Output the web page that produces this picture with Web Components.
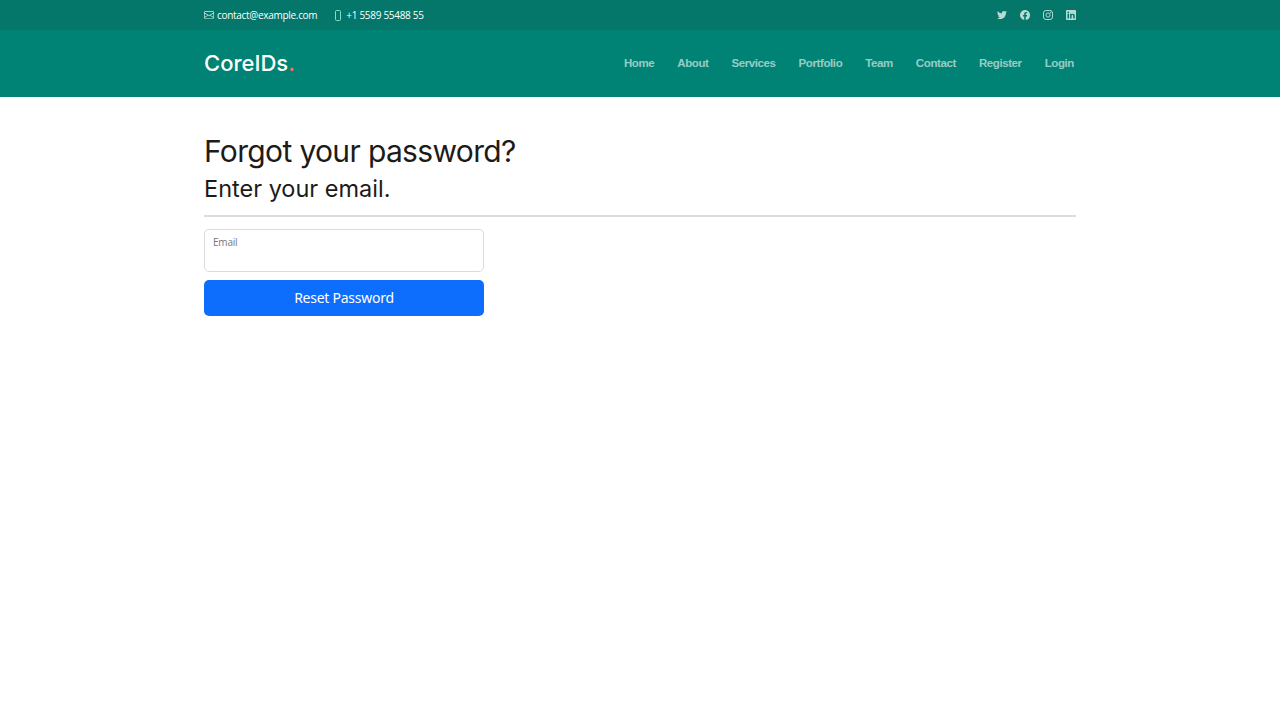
<!DOCTYPE html>
<html lang="en">
<head>
<meta charset="utf-8">
<title>Forgot your password?</title>
<style>
  html, body { margin: 0; padding: 0; background: #fff; }
</style>
</head>
<body>
<site-topbar></site-topbar>
<site-header></site-header>
<forgot-form></forgot-form>

<script>
class SiteTopbar extends HTMLElement {
  constructor() {
    super();
    this.attachShadow({ mode: 'open' });
    this.shadowRoot.innerHTML = `
      <style>
        :host { display: block; height: 30px; background: #04766a; color: #fff; font: 10px/30px "Open Sans", sans-serif; letter-spacing: -.3px; }
        .wrap { width: 872px; height: 30px; margin: 0 auto; display: flex; justify-content: space-between; align-items: center; }
        .info { display: flex; gap: 18px; }
        .info span { display: flex; align-items: center; gap: 3px; }
        .info .phone { gap: 5px; }
        .social { display: flex; gap: 13px; align-items: center; }
        svg { display: block; }
      </style>
      <div class="wrap">
        <div class="info">
          <span>
            <svg width="10" height="10" viewBox="0 0 16 16" fill="#d5efe9"><path d="M0 4a2 2 0 0 1 2-2h12a2 2 0 0 1 2 2v8a2 2 0 0 1-2 2H2a2 2 0 0 1-2-2V4zm2-1a1 1 0 0 0-1 1v.2l7 4.2 7-4.2V4a1 1 0 0 0-1-1H2zm13 2.4-4.7 2.8 4.700 2.900V5.400zM15 12.200l-5.600-3.400L8 9.600l-1.400-.8L1 12.200V12a1 1 0 0 0 1 1h12a1 1 0 0 0 1-1v-.2zM1 11.100l4.700-2.900L1 5.400v5.700z"/></svg>
            contact@example.com
          </span>
          <span class="phone">
            <svg width="6" height="11" viewBox="0 0 6 11" fill="none" stroke="#7fe0d0" stroke-width="1"><rect x=".5" y=".5" width="5" height="10" rx="1"/></svg>
            +1 5589 55488 55
          </span>
        </div>
        <div class="social">
          <svg width="10" height="10" viewBox="0 0 16 16" fill="#b7dcd5"><path d="M5 14.500c6 0 9.300-5 9.300-9.300v-.4A6.700 6.700 0 0 0 16 3a6.500 6.500 0 0 1-1.900.5 3.300 3.300 0 0 0 1.400-1.800 6.600 6.600 0 0 1-2.100.8 3.300 3.300 0 0 0-5.600 3A9.300 9.300 0 0 1 1.100 2.100a3.300 3.300 0 0 0 1 4.400 3.300 3.300 0 0 1-1.500-.4 3.300 3.300 0 0 0 2.600 3.200 3.300 3.300 0 0 1-1.500.1 3.300 3.300 0 0 0 3.100 2.300A6.600 6.600 0 0 1 0 13.100a9.300 9.300 0 0 0 5 1.400z"/></svg>
          <svg width="10" height="10" viewBox="0 0 16 16" fill="#b7dcd5"><path d="M16 8a8 8 0 1 0-9.300 7.900v-5.600h-2V8h2V6.200c0-2 1.200-3.100 3-3.100.9 0 1.800.2 1.800.2v2h-1c-1 0-1.300.6-1.300 1.200V8h2.200l-.4 2.300H9.200v5.600A8 8 0 0 0 16 8z"/></svg>
          <svg width="10" height="10" viewBox="0 0 16 16" fill="none" stroke="#b7dcd5" stroke-width="1.500"><rect x=".8" y=".8" width="14.400" height="14.400" rx="4"/><circle cx="8" cy="8" r="3.300"/><circle cx="12" cy="4" r=".5" fill="#b7dcd5"/></svg>
          <svg width="10" height="10" viewBox="0 0 16 16" fill="#b7dcd5"><path fill-rule="evenodd" d="M1.200 0h13.600C15.500 0 16 .5 16 1.100v13.800c0 .6-.5 1.100-1.200 1.100H1.200C.5 16 0 15.500 0 14.900V1.100C0 .5.500 0 1.200 0zM2.400 6v7.600h2.400V6H2.400zm1.200-3.800a1.400 1.400 0 1 0 0 2.800 1.400 1.400 0 0 0 0-2.800zM6.500 6v7.600h2.400V9.800c0-1 .2-2 1.400-2s1.300 1.100 1.300 2v3.800H14V9.400c0-2-.5-3.600-2.900-3.600-1.100 0-1.900.6-2.200 1.200V6H6.500z"/></svg>
        </div>
      </div>`;
  }
}

class SiteHeader extends HTMLElement {
  constructor() {
    super();
    this.attachShadow({ mode: 'open' });
    const links = ['Home', 'About', 'Services', 'Portfolio', 'Team', 'Contact', 'Register', 'Login'];
    this.shadowRoot.innerHTML = `
      <style>
        :host { display: block; height: 67px; background: #008374; }
        .wrap { width: 872px; height: 67px; margin: 0 auto; display: flex; justify-content: space-between; align-items: center; }
        .logo { font: 500 22px "Inter", sans-serif; color: #fff; margin-top: -2px; }
        .logo b { color: #f96f59; font-weight: 500; }
        nav { display: flex; gap: 23px; margin-right: 2px; margin-top: -1px; }
        a { font: bold 11.500px "Liberation Sans", Arial, sans-serif; letter-spacing: -.4px; color: rgba(255,255,255,.6); text-decoration: none; }
      </style>
      <div class="wrap">
        <div class="logo">CoreIDs<b>.</b></div>
        <nav>${links.map(l => `<a href="#">${l}</a>`).join('')}</nav>
      </div>`;
  }
}

class ForgotForm extends HTMLElement {
  constructor() {
    super();
    this.attachShadow({ mode: 'open' });
    this.shadowRoot.innerHTML = `
      <style>
        :host { display: block; width: 872px; margin: 0 auto; padding-top: 35px; color: #212529; }
        h1, h2 { margin: 0; font-family: "Inter", sans-serif; font-weight: 400; color: #1d1b18; }
        h1 { font-size: 30px; line-height: 38px; letter-spacing: -.65px; }
        h2 { font-size: 23.500px; line-height: 28px; margin-top: 5px; }
        hr { border: 0; height: 2px; background: #dcdcdc; margin: 12px 0 12px; }
        .field { width: 280px; height: 43px; box-sizing: border-box; border: 1px solid #dadde0; border-radius: 5px; padding: 5px 8px; font: 10px "Open Sans", sans-serif; letter-spacing: -.2px; color: #777; }
        button { display: block; width: 280px; height: 36px; margin-top: 8px; padding: 0 0 2px; border: 0; border-radius: 5px; background: #0d6efd; color: #fff; font: 14px "Noto Sans", sans-serif; letter-spacing: -.25px; }
      </style>
      <h1>Forgot your password?</h1>
      <h2>Enter your email.</h2>
      <hr>
      <div class="field">Email</div>
      <button>Reset Password</button>`;
  }
}

customElements.define('site-topbar', SiteTopbar);
customElements.define('site-header', SiteHeader);
customElements.define('forgot-form', ForgotForm);
</script>
</body>
</html>
